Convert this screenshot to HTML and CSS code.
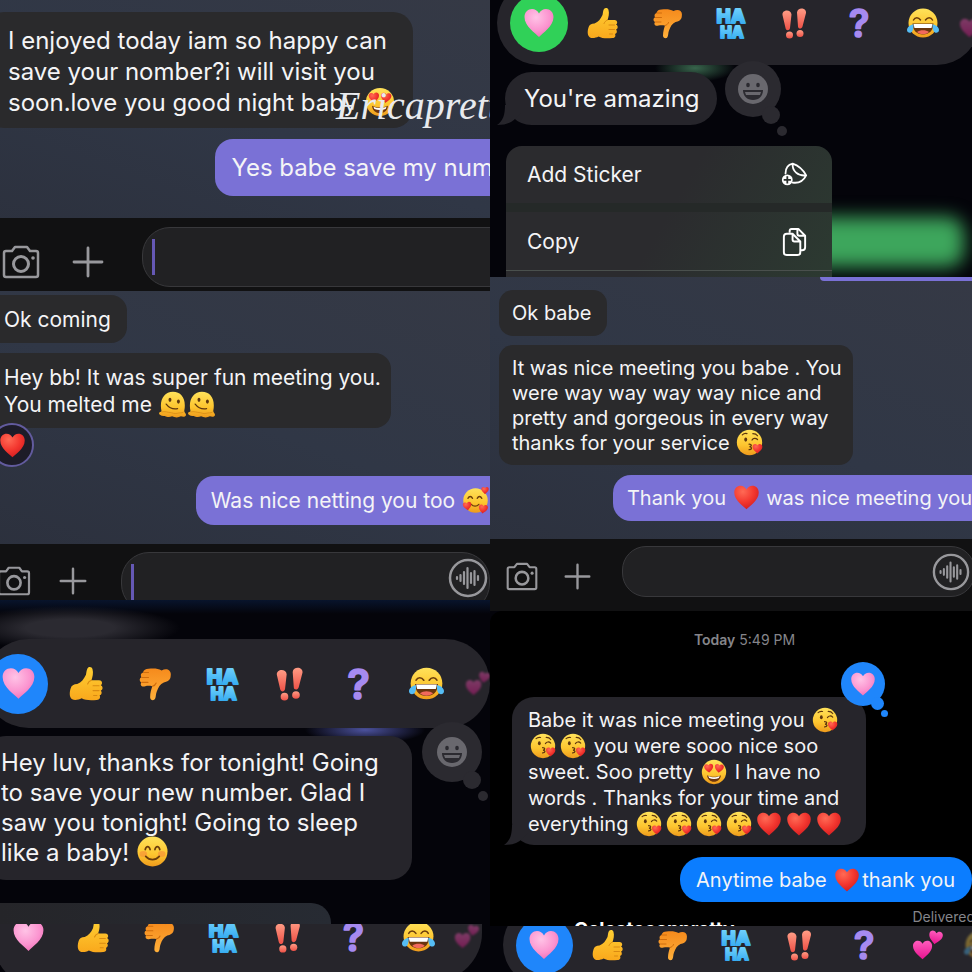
FILE: index.html
```html
<!DOCTYPE html>
<html lang="en">
<head>
    <meta charset="UTF-8">
    <meta name="viewport" content="width=device-width, initial-scale=1.0">
    <title>Messages</title>
    <link rel="stylesheet" href="styles.css">
</head>

<body>

    <!-- shared emoji and icons -->
    <svg class="sprites" aria-hidden="true">
        <defs>
            <linearGradient id="gFace" x1="0" y1="0" x2="0" y2="1">
                <stop offset="0" stop-color="#ffe25a"/>
                <stop offset="0.6" stop-color="#fdc52f"/>
                <stop offset="1" stop-color="#ee9a1c"/>
            </linearGradient>
            <linearGradient id="gUp" x1="0" y1="0" x2="0" y2="1">
                <stop offset="0" stop-color="#ffcf33"/>
                <stop offset="1" stop-color="#f9a81c"/>
            </linearGradient>
            <linearGradient id="gDown" x1="0" y1="0" x2="0" y2="1">
                <stop offset="0" stop-color="#f58a1c"/>
                <stop offset="1" stop-color="#ffb03a"/>
            </linearGradient>
            <radialGradient id="gPink" cx="0.4" cy="0.3" r="0.8">
                <stop offset="0" stop-color="#ffc3e6"/>
                <stop offset="0.6" stop-color="#fb93cf"/>
                <stop offset="1" stop-color="#ee68b2"/>
            </radialGradient>
            <radialGradient id="gRed" cx="0.35" cy="0.25" r="0.9">
                <stop offset="0" stop-color="#ff6a55"/>
                <stop offset="0.5" stop-color="#f3372f"/>
                <stop offset="1" stop-color="#c9151c"/>
            </radialGradient>
            <linearGradient id="gBlue" x1="0" y1="0" x2="0" y2="1">
                <stop offset="0" stop-color="#7ad8ff"/>
                <stop offset="1" stop-color="#2aa4ee"/>
            </linearGradient>
            <linearGradient id="gBang" x1="0" y1="0" x2="0" y2="1">
                <stop offset="0" stop-color="#ff9c85"/>
                <stop offset="1" stop-color="#ee5147"/>
            </linearGradient>
            <linearGradient id="gMagenta" x1="0" y1="0" x2="0" y2="1">
                <stop offset="0" stop-color="#ff5cbd"/>
                <stop offset="1" stop-color="#e8128f"/>
            </linearGradient>
            <path id="heartShape" d="M32 60C25 52 3 39 3 20C3 10 10 4 18 4c6 0 11 3 14 9c3-6 8-9 14-9c8 0 15 6 15 16c0 19-22 32-29 40z"/>
        </defs>

        <symbol id="pink" viewBox="0 0 64 64"><use href="#heartShape" fill="url(#gPink)"/></symbol>
        <symbol id="red" viewBox="0 0 64 64"><use href="#heartShape" fill="url(#gRed)"/></symbol>
        <symbol id="hearts" viewBox="0 0 64 64">
            <use href="#heartShape" fill="url(#gMagenta)" transform="translate(0 21) scale(.66)"/>
            <use href="#heartShape" fill="url(#gMagenta)" transform="translate(35 0) rotate(10) scale(.47)"/>
        </symbol>
        <symbol id="up" viewBox="0 0 64 64">
            <path fill="url(#gUp)" d="M3 41c1-5 6-8 12-8c8-3 12-9 16-17c1-4 1-9 3-12c2-3 8-3 9 2c2 7 0 14-2 20h14c6 0 7 7 3 9c5 2 4 9 0 10c3 3 2 8-2 9c2 4 0 8-5 8c-11 1-21 1-28-3c-5 3-13 4-17 2c-6-4-5-14-3-20z"/>
            <path fill="none" stroke="#d98a12" stroke-width="2" stroke-linecap="round" d="M41 26c-3 1-6 4-7 7M44 36h11M44 45h11M45 54h6"/>
        </symbol>
        <symbol id="down" viewBox="0 0 64 64">
            <path fill="url(#gDown)" d="M61 22c-2 5-6 7-12 8c-7 3-10 9-13 17c-2 5-1 9-3 13c-2 4-9 3-9-3c0-8 2-14 4-20c-5-1-9-1-13 0c-7 2-10-3-7-7c-4-2-4-8 0-9c-2-4-1-8 3-9c1-5 5-7 10-7c9-1 17-1 24 3c5-3 11-3 14 0c4 4 3 9 2 14z"/>
            <path fill="none" stroke="#cf6c0c" stroke-width="2" stroke-linecap="round" d="M28 37c4-1 6-3 7-6M9 30h11M9 21h12M12 12h9"/>
        </symbol>
        <symbol id="haha" viewBox="0 0 64 64">
            <g class="haha" fill="url(#gBlue)" stroke="url(#gBlue)" text-anchor="middle">
                <text x="32" y="32" font-size="38">HA</text>
                <text x="34" y="62" font-size="31">HA</text>
            </g>
        </symbol>
        <symbol id="bangs" viewBox="0 0 64 64">
            <g fill="url(#gBang)">
                <path d="M7 16c-1-11 17-12 18-1l-3 27c-1 6-8 6-9 0z"/>
                <path d="M36 11c1-11 19-10 18 1l-7 27c-2 6-9 5-9 0z"/>
                <circle cx="21" cy="56" r="7"/>
                <circle cx="42" cy="53" r="7"/>
            </g>
        </symbol>
        <symbol id="question" viewBox="0 0 64 64">
            <text class="question" x="32" y="60" font-size="76" text-anchor="middle">?</text>
        </symbol>
        <symbol id="joy" viewBox="0 0 64 64">
            <circle cx="32" cy="32" r="29" fill="url(#gFace)"/>
            <path fill="none" stroke="#6b3d0c" stroke-width="3" stroke-linecap="round" d="M13 26c3-6 10-6 14 0M37 26c4-6 11-6 14 0"/>
            <path fill="#69350e" d="M11 33h42c0 14-9 22-21 22s-21-8-21-22z"/>
            <path fill="#fff" d="M13 34h38l-2 8H15z"/>
            <path fill="#f1695c" d="M20 50c6-5 18-5 24 0c-6 6-18 6-24 0z"/>
            <path fill="#55bdf5" d="M13 35c-6 0-13 5-13 11s8 8 11 2c2-4 2-9 2-13zM51 35c6 0 13 5 13 11s-8 8-11 2c-2-4-2-9-2-13z"/>
        </symbol>
        <symbol id="kiss" viewBox="0 0 64 64">
            <circle cx="32" cy="32" r="30" fill="url(#gFace)"/>
            <ellipse cx="23" cy="25" rx="3.500" ry="5" fill="#5f370e"/>
            <path fill="none" stroke="#5f370e" stroke-width="3" stroke-linecap="round" d="M38 26c3-5 9-5 13-1M15 14c3-3 7-4 11-3M40 11c5 0 9 2 11 5M31 36c7 0 7 5 1 6c7 1 6 7-1 7"/>
            <use href="#heartShape" fill="url(#gRed)" transform="translate(38 34) scale(.4)"/>
        </symbol>
        <symbol id="eyes" viewBox="0 0 64 64">
            <circle cx="32" cy="32" r="30" fill="url(#gFace)"/>
            <use href="#heartShape" fill="url(#gRed)" transform="translate(6 12) rotate(-6) scale(.38)"/>
            <use href="#heartShape" fill="url(#gRed)" transform="translate(34 10) rotate(6) scale(.38)"/>
            <path fill="#6b350e" d="M15 40c10 5 24 5 34 0c-1 10-8 16-17 16s-16-6-17-16z"/>
            <path fill="#fff" d="M18 42c8 4 20 4 28 0l-2 5c-7 3-17 3-24 0z"/>
        </symbol>
        <symbol id="melt" viewBox="0 0 64 64">
            <path fill="url(#gFace)" d="M6 48C0 22 12 2 33 2s32 18 27 44c-1 5 4 6 4 10c0 6-8 5-12 4c-7 4-15 3-21 0c-6 3-13 2-17-1C6 60 0 57 0 53c0-4 5-3 6-5z"/>
            <path fill="none" stroke="#d98e17" stroke-width="2" d="M6 50c8-3 15 1 20 1s10 4 17 2c6-2 10 0 15-3"/>
            <ellipse cx="26" cy="21" rx="3.500" ry="5" fill="#5f370e"/>
            <ellipse cx="46" cy="25" rx="3.500" ry="5" fill="#5f370e"/>
            <path fill="none" stroke="#5f370e" stroke-width="3" stroke-linecap="round" d="M17 31c7 9 17 13 27 11"/>
        </symbol>
        <symbol id="blush" viewBox="0 0 64 64">
            <circle cx="32" cy="32" r="31" fill="url(#gFace)"/>
            <ellipse cx="13" cy="37" rx="8" ry="6" fill="#f58a3a" opacity="0.6"/>
            <ellipse cx="51" cy="37" rx="8" ry="6" fill="#f58a3a" opacity="0.6"/>
            <path fill="none" stroke="#6b3d0c" stroke-width="3.500" stroke-linecap="round" d="M17 28c2-8 8-8 10 0M37 28c2-8 8-8 10 0M18 42c8 9 20 9 28 0"/>
        </symbol>
        <symbol id="adore" viewBox="0 0 64 64">
            <circle cx="32" cy="32" r="29" fill="url(#gFace)"/>
            <path fill="none" stroke="#6b3d0c" stroke-width="3" stroke-linecap="round" d="M14 27c3-6 8-6 11 0M36 27c3-6 8-6 11 0M22 41c5 6 13 6 18 0"/>
            <use href="#heartShape" fill="url(#gRed)" transform="translate(45 -1) scale(.3)"/>
            <use href="#heartShape" fill="url(#gRed)" transform="translate(0 36) rotate(-8) scale(.35)"/>
            <use href="#heartShape" fill="url(#gRed)" transform="translate(40 39) rotate(8) scale(.37)"/>
        </symbol>
        <symbol id="grin" viewBox="0 0 32 32">
            <circle cx="16" cy="16" r="15" fill="#69686e"/>
            <g fill="#2b2a30">
                <ellipse cx="11" cy="12" rx="1.800" ry="2.300"/>
                <ellipse cx="21" cy="12" rx="1.800" ry="2.300"/>
                <path d="M6 17h20c0 6-4 10-10 10S6 23 6 17z"/>
            </g>
            <path fill="#69686e" d="M8 19h16l-1 3H9z"/>
        </symbol>

        <symbol id="camera" viewBox="0 0 38 34">
            <path fill="none" stroke="currentColor" stroke-width="2.500" stroke-linejoin="round" d="M4 6h6l3-4h12l3 4h6q2 0 2 2v22q0 2-2 2H4q-2 0-2-2V8q0-2 2-2z"/>
            <circle cx="19" cy="19" r="7.500" fill="none" stroke="currentColor" stroke-width="3"/>
            <circle cx="31" cy="13" r="1.800" fill="currentColor"/>
        </symbol>
        <symbol id="plus" viewBox="0 0 32 32">
            <path fill="none" stroke="currentColor" stroke-width="2.800" stroke-linecap="round" d="M16 2v28M2 16h28"/>
        </symbol>
        <symbol id="voice" viewBox="0 0 40 40">
            <circle cx="20" cy="20" r="18" fill="none" stroke="currentColor" stroke-width="2.500"/>
            <path fill="none" stroke="currentColor" stroke-width="2.200" stroke-linecap="round" d="M9 19v2M12.500 17v6M16 14v12M19.500 10v20M23 15v10M26.500 13v14M30 18v4"/>
        </symbol>
    </svg>

    <main class="collage">

        <div class="column">
            <section class="shot slate first">
                <div class="bubble in cut">I enjoyed today iam so happy can<br>save your nomber?i will visit you<br>soon.love you good night baby<svg class="emoji"><use href="#eyes"/></svg></div>
                <div class="bubble out">Yes babe save my num</div>
                <form class="composer">
                    <button type="button" class="icon" aria-label="Camera"><svg class="camera"><use href="#camera"/></svg></button>
                    <button type="button" class="icon" aria-label="Add"><svg class="plus"><use href="#plus"/></svg></button>
                    <div class="field"><span class="caret"></span><input type="text" aria-label="Message"></div>
                </form>
                <span class="watermark">Ericapretty</span>
            </section>

            <section class="shot slate second">
                <div class="bubble in cut">Ok coming</div>
                <div class="bubble in cut wide">Hey bb! It was super fun meeting you.<br>You melted me <svg class="emoji"><use href="#melt"/></svg><svg class="emoji"><use href="#melt"/></svg>
                    <span class="reaction"><svg><use href="#red"/></svg></span>
                </div>
                <div class="bubble out">Was nice netting you too <svg class="emoji"><use href="#adore"/></svg></div>
                <form class="composer">
                    <button type="button" class="icon" aria-label="Camera"><svg class="camera"><use href="#camera"/></svg></button>
                    <button type="button" class="icon" aria-label="Add"><svg class="plus"><use href="#plus"/></svg></button>
                    <div class="field">
                        <span class="caret"></span><input type="text" aria-label="Message">
                        <button type="button" class="icon" aria-label="Voice message"><svg class="voice"><use href="#voice"/></svg></button>
                    </div>
                </form>
            </section>

            <section class="shot night tonight">
                <div class="tray">
                    <button class="picked" aria-label="Love"><svg><use href="#pink"/></svg></button>
                    <button aria-label="Like"><svg><use href="#up"/></svg></button>
                    <button aria-label="Dislike"><svg><use href="#down"/></svg></button>
                    <button aria-label="Laugh"><svg><use href="#haha"/></svg></button>
                    <button aria-label="Emphasize"><svg><use href="#bangs"/></svg></button>
                    <button aria-label="Question"><svg><use href="#question"/></svg></button>
                    <button aria-label="Tears of joy"><svg><use href="#joy"/></svg></button>
                    <button class="faded" aria-label="More"><svg><use href="#hearts"/></svg></button>
                </div>
                <div class="message">
                    <div class="bubble in cut">Hey luv, thanks for tonight! Going<br>to save your new number. Glad I<br>saw you tonight! Going to sleep<br>like a baby! <svg class="emoji"><use href="#blush"/></svg></div>
                    <div class="thought"><svg><use href="#grin"/></svg></div>
                </div>
                <div class="next-menu"></div>
            </section>

            <section class="shot night strip-left">
                <div class="tray">
                    <button aria-label="Love"><svg><use href="#pink"/></svg></button>
                    <button aria-label="Like"><svg><use href="#up"/></svg></button>
                    <button aria-label="Dislike"><svg><use href="#down"/></svg></button>
                    <button aria-label="Laugh"><svg><use href="#haha"/></svg></button>
                    <button aria-label="Emphasize"><svg><use href="#bangs"/></svg></button>
                    <button aria-label="Question"><svg><use href="#question"/></svg></button>
                    <button aria-label="Tears of joy"><svg><use href="#joy"/></svg></button>
                    <button class="faded" aria-label="More"><svg><use href="#hearts"/></svg></button>
                </div>
            </section>
        </div>

        <div class="column">
            <section class="shot night amazing">
                <div class="tray">
                    <button class="picked" aria-label="Love"><svg><use href="#pink"/></svg></button>
                    <button aria-label="Like"><svg><use href="#up"/></svg></button>
                    <button aria-label="Dislike"><svg><use href="#down"/></svg></button>
                    <button aria-label="Laugh"><svg><use href="#haha"/></svg></button>
                    <button aria-label="Emphasize"><svg><use href="#bangs"/></svg></button>
                    <button aria-label="Question"><svg><use href="#question"/></svg></button>
                    <button aria-label="Tears of joy"><svg><use href="#joy"/></svg></button>
                    <button class="faded" aria-label="More"><svg><use href="#hearts"/></svg></button>
                </div>
                <div class="message">
                    <div class="bubble in tail">You're amazing</div>
                    <div class="thought"><svg><use href="#grin"/></svg></div>
                </div>
                <div class="menu">
                    <button>Add Sticker
                        <svg viewBox="0 0 30 28">
                            <path fill="none" stroke="#fff" stroke-width="2" stroke-linejoin="round" stroke-linecap="round" d="M5 13C5 7 8 3 13 2c6 2 11 6 15 13c-3 6-8 9-15 8M13 2c-1 8 6 14 15 13"/>
                            <circle cx="7" cy="20" r="6" fill="#fff"/>
                            <path fill="none" stroke="#2b302d" stroke-width="2" d="M7 16v8M3 20h8"/>
                        </svg>
                    </button>
                    <button>Copy
                        <svg viewBox="0 0 26 30">
                            <g fill="none" stroke="#fff" stroke-width="2" stroke-linejoin="round">
                                <path d="M8 6V4q0-2 2-2h7l7 7v12q0 3-3 3h-2M16 2v5q0 2 2 2h6"/>
                                <path d="M5 7h6l8 8v11q0 3-3 3H5q-3 0-3-3V10q0-3 3-3zM11 7v6q0 2 2 2h6"/>
                            </g>
                        </svg>
                    </button>
                </div>
            </section>

            <section class="shot slate third">
                <div class="sliver"></div>
                <div class="bubble in">Ok babe</div>
                <div class="bubble in wide">It was nice meeting you babe . You<br>were way way way way nice and<br>pretty and gorgeous in every way<br>thanks for your service <svg class="emoji"><use href="#kiss"/></svg></div>
                <div class="bubble out">Thank you <svg class="emoji"><use href="#red"/></svg> was nice meeting you</div>
                <form class="composer">
                    <button type="button" class="icon" aria-label="Camera"><svg class="camera"><use href="#camera"/></svg></button>
                    <button type="button" class="icon" aria-label="Add"><svg class="plus"><use href="#plus"/></svg></button>
                    <div class="field">
                        <input type="text" aria-label="Message">
                        <button type="button" class="icon" aria-label="Voice message"><svg class="voice"><use href="#voice"/></svg></button>
                    </div>
                </form>
            </section>

            <section class="shot today">
                <p class="time"><b>Today</b> 5:49 PM</p>
                <div class="message">
                    <div class="bubble in tail">Babe it was nice meeting you <svg class="emoji"><use href="#kiss"/></svg><br><svg class="emoji"><use href="#kiss"/></svg><svg class="emoji"><use href="#kiss"/></svg> you were sooo nice soo<br>sweet. Soo pretty <svg class="emoji"><use href="#eyes"/></svg> I have no<br>words . Thanks for your time and<br>everything <svg class="emoji"><use href="#kiss"/></svg><svg class="emoji"><use href="#kiss"/></svg><svg class="emoji"><use href="#kiss"/></svg><svg class="emoji"><use href="#kiss"/></svg><svg class="emoji"><use href="#red"/></svg><svg class="emoji"><use href="#red"/></svg><svg class="emoji"><use href="#red"/></svg></div>
                    <div class="thought blue"><svg><use href="#pink"/></svg></div>
                </div>
                <div class="bubble out">Anytime babe <svg class="emoji"><use href="#red"/></svg>thank you</div>
                <div class="footer">
                    <span class="name">Celestecanpretty</span>
                    <span class="status">Delivered</span>
                </div>
            </section>

            <section class="shot night strip-right">
                <div class="tray">
                    <button class="picked" aria-label="Love"><svg><use href="#pink"/></svg></button>
                    <button aria-label="Like"><svg><use href="#up"/></svg></button>
                    <button aria-label="Dislike"><svg><use href="#down"/></svg></button>
                    <button aria-label="Laugh"><svg><use href="#haha"/></svg></button>
                    <button aria-label="Emphasize"><svg><use href="#bangs"/></svg></button>
                    <button aria-label="Question"><svg><use href="#question"/></svg></button>
                    <button aria-label="Two hearts"><svg><use href="#hearts"/></svg></button>
                    <button class="faded" aria-label="More"><svg><use href="#joy"/></svg></button>
                </div>
            </section>
        </div>

    </main>

</body>

</html>
```
FILE: styles.css
```css
* {
    margin: 0;
    padding: 0;
    box-sizing: border-box;
}

body {
    font-family: Inter, "Liberation Sans", sans-serif;
    background-color: #04040a;
    color: #f4f4f6;
}

button {
    background: none;
    border: none;
    color: inherit;
    font: inherit;
    cursor: pointer;
}

.sprites {
    position: absolute;
    width: 0;
    height: 0;
}

.haha {
    font-family: Inter, sans-serif;
    font-weight: 800;
    stroke-width: 4;
    stroke-linejoin: round;
}

.question {
    font-family: Inter, sans-serif;
    font-weight: 600;
    fill: #a68af0;
    stroke: #a68af0;
    stroke-width: 3;
    stroke-linejoin: round;
}

.collage {
    display: grid;
    grid-template-columns: 490fr 482fr;
    height: 100vh;
    overflow: hidden;
}

.column {
    display: flex;
    flex-direction: column;
    min-width: 0;
    min-height: 0;
}

.shot {
    display: flex;
    flex-direction: column;
    align-items: flex-start;
    flex-shrink: 0;
    position: relative;
    overflow: hidden;
}

.shot:last-child {
    flex: 1 1 0;
}

.slate {
    background: linear-gradient(20deg, #2b2f3b, #303746 55%, #353945);
}

.night {
    background-color: #04040a;
}

/* bubbles */
.bubble {
    position: relative;
    white-space: nowrap;
}

.in {
    background-color: #2a2a2c;
}

.out {
    align-self: flex-end;
    background-color: #7a71d6;
    border-radius: 18px 0 0 18px;
}

.cut {
    margin-left: -16px;
}

.emoji {
    width: 27px;
    height: 27px;
    margin: -4px 1px;
    vertical-align: -2px;
}

/* composer */
.composer {
    align-self: stretch;
    display: flex;
    align-items: center;
    background-color: #111112;
    color: #98989c;
}

.icon,
.icon svg {
    display: block;
    flex-shrink: 0;
}

.composer > .icon {
    margin-top: 10px;
}

.field {
    flex: 1;
    display: flex;
    align-items: center;
    min-width: 0;
    height: 60px;
    background-color: #212123;
    border: 1px solid #38383b;
    border-radius: 28px;
}

.field input {
    flex: 1;
    min-width: 0;
    height: 100%;
    background: none;
    border: none;
    outline: none;
    color: #f4f4f6;
    font: inherit;
}

.caret {
    width: 3px;
    height: 36px;
    margin-left: 9px;
    background-color: #6558b4;
}

/* tapback tray */
.tray {
    display: flex;
    align-items: center;
    flex-shrink: 0;
    background-color: #26252b;
}

.tray button {
    display: flex;
    align-items: center;
    justify-content: center;
    flex-shrink: 0;
}

.tray .picked::before {
    content: "";
    grid-area: 1 / 1;
    border-radius: 50%;
    background-color: #1f86fb;
}

.tray .picked {
    display: grid;
    place-items: center;
}

.tray .picked svg {
    grid-area: 1 / 1;
}

.tray .faded {
    opacity: 0.4;
    filter: blur(1px);
}

.message {
    position: relative;
}

.message .in {
    background-color: #26252b;
}

.thought {
    position: absolute;
    display: flex;
    align-items: center;
    justify-content: center;
    width: 60px;
    height: 60px;
    border-radius: 50%;
    background-color: #2b2a30;
}

.thought svg {
    width: 32px;
    height: 32px;
    z-index: 1;
}

.thought::before,
.thought::after {
    content: "";
    position: absolute;
    border-radius: 50%;
    background-color: inherit;
}

.thought::before {
    width: 18px;
    height: 18px;
    right: 1px;
    bottom: -7px;
}

.thought::after {
    width: 10px;
    height: 10px;
    right: -6px;
    bottom: -19px;
}

.tail::before {
    content: "";
    position: absolute;
    left: -8px;
    bottom: 0;
    width: 24px;
    height: 20px;
    background-color: inherit;
    clip-path: path("M8 0C8 10 6 16 0 20C8 20 14 18 18 14L24 8V0z");
}

/* top left chat */
.first {
    padding-top: 12px;
    font-size: 24px;
    line-height: 31px;
}

.first .in {
    padding: 13px 17px 10px 24px;
    border-radius: 20px;
}

.first .emoji {
    width: 30px;
    height: 30px;
    margin-left: 8px;
}

.first .out {
    margin-top: 11px;
    margin-right: -3px;
    padding: 13px 0 13px 16px;
}

.first .composer {
    margin-top: 22px;
    padding: 9px 0 4px 2px;
}

.first .camera {
    width: 38px;
    height: 34px;
}

.first .plus {
    width: 32px;
    height: 32px;
    margin-left: 32px;
}

.first .field {
    margin-left: 38px;
    margin-right: -30px;
}

.watermark {
    position: absolute;
    left: 336px;
    top: 86px;
    font-family: "Liberation Serif", serif;
    font-style: italic;
    font-size: 40px;
    line-height: 40px;
    color: #e8eaee;
}

/* middle left chat */
.second {
    padding-top: 4px;
    font-size: 21px;
    line-height: 27px;
}

.second .in {
    padding: 11px 16px 10px 20px;
    border-radius: 16px;
}

.second .wide {
    margin-top: 10px;
    padding-right: 10px;
}

.second .out {
    margin-top: 48px;
    padding: 11px 0 11px 15px;
}

.reaction {
    position: absolute;
    left: 6px;
    bottom: -39px;
    display: flex;
    align-items: center;
    justify-content: center;
    width: 44px;
    height: 44px;
    border: 2px solid #625b9e;
    border-radius: 50%;
    background-color: #1d1c28;
}

.reaction svg {
    width: 27px;
    height: 27px;
}

.second .composer {
    margin-top: 19px;
    padding-top: 8px;
}

.second .camera {
    width: 34px;
    height: 30px;
    margin-left: -3px;
}

.second .plus {
    width: 28px;
    height: 28px;
    margin-left: 28px;
}

.second .field {
    margin-left: 34px;
    margin-bottom: -12px;
    padding-bottom: 8px;
}

.second .caret {
    margin-bottom: -8px;
}

.second .voice {
    width: 40px;
    height: 40px;
    margin-right: 1px;
}

/* bottom left */
.tonight {
    padding-top: 39px;
    font-size: 24px;
    line-height: 30px;
    background:
        radial-gradient(ellipse 60px 14px at 365px 130px, #4b519c, transparent),
        radial-gradient(ellipse 110px 22px at 70px 28px, #2b2a31 40%, transparent),
        linear-gradient(#08142c, #04040a 14px);
}

.tonight .tray {
    height: 89px;
    width: 506px;
    margin-left: -16px;
    border-radius: 45px;
}

.tonight .tray button {
    width: 68px;
}

.tonight .tray svg {
    width: 35px;
    height: 35px;
}

.tonight .picked::before {
    width: 60px;
    height: 60px;
}

.tonight .tray .faded {
    width: 36px;
}

.tonight .faded svg {
    width: 26px;
}

.tonight .message {
    margin-top: 8px;
}

.tonight .in {
    padding: 12px 33px 12px 17px;
    border-radius: 22px;
}

.tonight .emoji {
    width: 31px;
    height: 31px;
}

.tonight .thought {
    right: -70px;
    top: -14px;
}

.next-menu {
    width: 331px;
    height: 21px;
    margin-top: 23px;
    border-radius: 0 20px 0 0;
    background: linear-gradient(90deg, #252529, #272b33);
}

.strip-left .tray {
    height: 89px;
    width: 486px;
    margin: -32px 0 0 -4px;
    border-radius: 0 0 48px 32px;
}

.strip-left .tray button {
    width: 65px;
}

.strip-left .tray svg {
    width: 33px;
    height: 33px;
}

.strip-left .tray .faded {
    width: 32px;
}

.strip-left .faded svg {
    width: 26px;
}

/* top right */
.amazing {
    font-size: 24px;
    line-height: 29px;
    background:
        radial-gradient(ellipse 40px 14px at 205px 68px, #38654c, transparent),
        #04040a;
}

.amazing::before {
    content: "";
    position: absolute;
    left: 230px;
    right: 8px;
    bottom: 10px;
    height: 50px;
    border-radius: 16px;
    background-color: #3da65c;
    filter: blur(9px);
}

.amazing .tray {
    height: 84px;
    width: 482px;
    margin: -19px 0 0 7px;
    padding-left: 10px;
    border-radius: 42px;
    overflow: hidden;
}

.amazing .tray button,
.strip-right .tray button {
    width: 64px;
}

.amazing .tray svg,
.strip-right .tray svg {
    width: 32px;
    height: 32px;
}

.amazing .tray .faded,
.strip-right .tray .faded {
    width: 40px;
}

.amazing .picked::before {
    width: 58px;
    height: 58px;
    background-color: #30d158;
}

.amazing .message {
    margin: 7px 0 0 15px;
}

.amazing .in {
    padding: 12px 17px 12px 19px;
    border-radius: 27px;
}

.amazing .thought {
    width: 56px;
    height: 56px;
    right: -64px;
    top: -11px;
}

.menu {
    position: relative;
    width: 326px;
    margin: 21px 0 0 16px;
    padding-bottom: 6px;
    border-radius: 16px 16px 0 0;
    background: linear-gradient(120deg, #2b2b2e 50%, #2c3a31);
    font-size: 21px;
}

.menu button {
    display: flex;
    align-items: center;
    justify-content: space-between;
    width: 100%;
    height: 57px;
    padding: 0 24px 0 21px;
}

.menu button + button {
    height: 68px;
    border-top: 9px solid #252928;
    border-bottom: 1px solid #4a504d;
}

.menu svg {
    width: 27px;
    height: 29px;
}

/* middle right chat */
.third {
    padding-left: 9px;
    font-size: 20px;
    line-height: 25px;
}

.sliver {
    align-self: flex-end;
    width: 152px;
    height: 4px;
    border-radius: 0 0 0 16px;
    background-color: #7a71d6;
}

.third .in {
    margin-top: 9px;
    padding: 11px 16px 10px 13px;
    border-radius: 14px;
}

.third .wide {
    padding-right: 11px;
    padding-bottom: 9px;
}

.third .out {
    margin-top: 10px;
    padding: 11px 0 10px 14px;
}

.third .composer {
    margin: 18px 0 0 -9px;
    padding: 7px 0 14px 16px;
}

.third .camera {
    width: 32px;
    height: 29px;
}

.third .plus {
    width: 27px;
    height: 27px;
    margin-left: 26px;
}

.third .field {
    height: 51px;
    margin-left: 31px;
    margin-right: -3px;
    border-radius: 24px;
}

.third .voice {
    width: 38px;
    height: 38px;
    margin-right: 4px;
}

/* bottom right */
.today {
    padding-top: 20px;
    border-top-left-radius: 12px;
    background-color: #000;
    font-size: 20px;
    line-height: 26px;
}

.time {
    align-self: center;
    margin-left: 27px;
    font-size: 14px;
    line-height: 18px;
    color: #85858a;
}

.time b {
    font-weight: 600;
}

.today .message {
    margin: 48px 0 0 22px;
}

.today .in {
    padding: 10px 22px 8px 16px;
    border-radius: 22px;
}

.today .emoji {
    width: 26px;
    height: 26px;
    margin: -4px 2px;
}

.today .blue {
    width: 44px;
    height: 44px;
    right: -19px;
    top: -35px;
    background-color: #1f86fb;
}

.blue svg {
    width: 26px;
    height: 26px;
}

.blue::before {
    width: 13px;
    height: 13px;
    bottom: -4px;
}

.blue::after {
    width: 7px;
    height: 7px;
    right: -3px;
    bottom: -11px;
}

.today .out {
    margin-top: 12px;
    padding: 10px 17px 9px 16px;
    border-radius: 22px;
    background-color: #0b7dff;
}

.footer {
    align-self: stretch;
    display: flex;
    justify-content: space-between;
    height: 24px;
    padding-left: 84px;
    overflow: hidden;
}

.name {
    padding-top: 16px;
    font-weight: 700;
    font-size: 19px;
    line-height: 24px;
    color: #fff;
}

.status {
    padding-top: 7px;
    margin-right: -3px;
    font-size: 14px;
    line-height: 16px;
    color: #85858a;
}

.strip-right .tray {
    height: 82px;
    width: 480px;
    margin: -22px 0 0 13px;
    padding-left: 9px;
    border-radius: 41px 0 0 41px;
}

.strip-right .picked::before {
    width: 57px;
    height: 57px;
}
```
